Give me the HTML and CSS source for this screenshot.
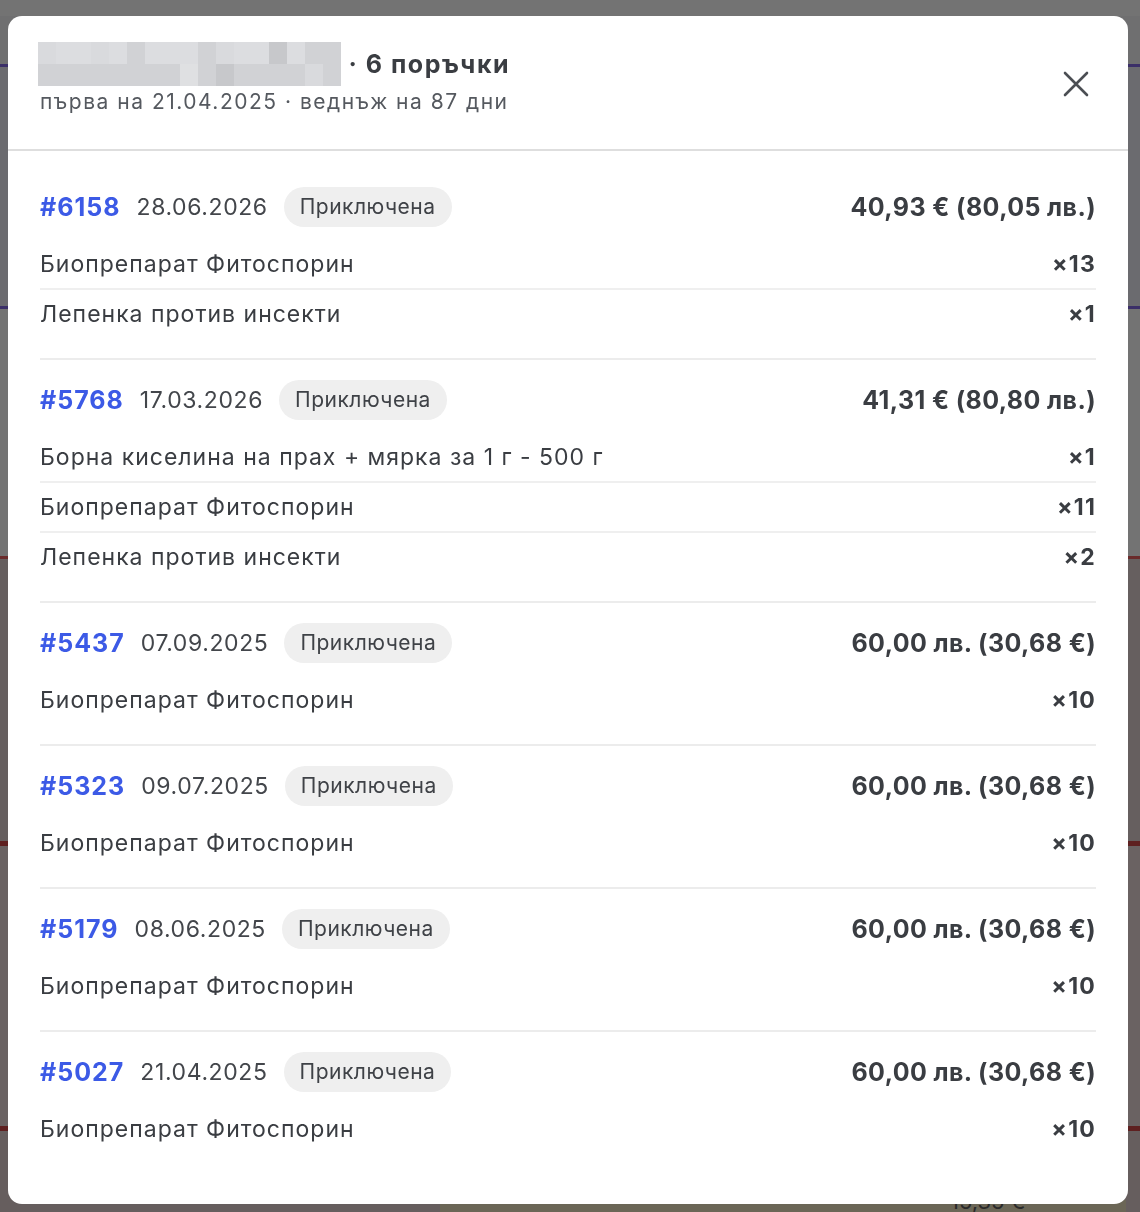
FILE: index.html
```html
<!DOCTYPE html>
<html lang="bg">
<head>
<meta charset="utf-8">
<title>Поръчки</title>
<link rel="stylesheet" href="styles.css">
</head>
<body>
<div class="backdrop">
  <div class="under-strip"></div>
  <div class="under-text">15,35 €</div>
</div>
<div class="overlay">
  <div class="modal" lang="bg">
    <header class="modal-head">
      <div class="head-text">
        <div class="title">
          <span class="blur">
            <i class="a"></i><i class="b"></i><i class="b"></i><i class="a"></i><i class="b"></i><i class="c"></i><i class="b"></i><i class="b"></i><i class="b"></i><i class="c"></i><i class="a"></i><i class="b"></i><i class="b"></i><i class="d"></i><i class="b"></i><i class="c"></i><i class="c"></i>
            <i class="c"></i><i class="c"></i><i class="c"></i><i class="c"></i><i class="c"></i><i class="c"></i><i class="c"></i><i class="c"></i><i class="e"></i><i class="c"></i><i class="d"></i><i class="c"></i><i class="c"></i><i class="c"></i><i class="c"></i><i class="a"></i><i class="c"></i>
          </span>
          <span class="count">· 6 поръчки</span>
        </div>
        <div class="subtitle">първа на 21.04.2025 · веднъж на 87 дни</div>
      </div>
      <button class="close" aria-label="Затвори">
        <svg width="26" height="26" viewBox="0 0 26 26"><path d="M2 2 L24 24 M24 2 L2 24" stroke="#4b4e53" stroke-width="2.6" stroke-linecap="round" fill="none"/></svg>
      </button>
    </header>
    <div class="modal-body">
      <section class="order">
        <div class="order-head">
          <a class="num">#6158</a><span class="date">28.06.2026</span><span class="badge">Приключена</span>
          <span class="total">40,93 € (80,05 лв.)</span>
        </div>
        <ul class="items">
          <li><span>Биопрепарат Фитоспорин</span><b>×13</b></li>
          <li><span>Лепенка против инсекти</span><b>×1</b></li>
        </ul>
      </section>
      <section class="order">
        <div class="order-head">
          <a class="num">#5768</a><span class="date">17.03.2026</span><span class="badge">Приключена</span>
          <span class="total">41,31 € (80,80 лв.)</span>
        </div>
        <ul class="items">
          <li><span>Борна киселина на прах + мярка за 1 г - 500 г</span><b>×1</b></li>
          <li><span>Биопрепарат Фитоспорин</span><b>×11</b></li>
          <li><span>Лепенка против инсекти</span><b>×2</b></li>
        </ul>
      </section>
      <section class="order">
        <div class="order-head">
          <a class="num">#5437</a><span class="date">07.09.2025</span><span class="badge">Приключена</span>
          <span class="total">60,00 лв. (30,68 €)</span>
        </div>
        <ul class="items">
          <li><span>Биопрепарат Фитоспорин</span><b>×10</b></li>
        </ul>
      </section>
      <section class="order">
        <div class="order-head">
          <a class="num">#5323</a><span class="date">09.07.2025</span><span class="badge">Приключена</span>
          <span class="total">60,00 лв. (30,68 €)</span>
        </div>
        <ul class="items">
          <li><span>Биопрепарат Фитоспорин</span><b>×10</b></li>
        </ul>
      </section>
      <section class="order">
        <div class="order-head">
          <a class="num">#5179</a><span class="date">08.06.2025</span><span class="badge">Приключена</span>
          <span class="total">60,00 лв. (30,68 €)</span>
        </div>
        <ul class="items">
          <li><span>Биопрепарат Фитоспорин</span><b>×10</b></li>
        </ul>
      </section>
      <section class="order">
        <div class="order-head">
          <a class="num">#5027</a><span class="date">21.04.2025</span><span class="badge">Приключена</span>
          <span class="total">60,00 лв. (30,68 €)</span>
        </div>
        <ul class="items">
          <li><span>Биопрепарат Фитоспорин</span><b>×10</b></li>
        </ul>
      </section>
    </div>
  </div>
</div>
</body>
</html>
```

FILE: styles.css
```css
* { box-sizing: border-box; }
html, body { margin: 0; padding: 0; }
body {
  width: 1140px;
  height: 1212px;
  overflow: hidden;
  font-family: Inter, "Noto Sans", "DejaVu Sans", sans-serif;
  color: #3a3d42;
}
.backdrop {
  height: 1212px;
  background: linear-gradient(to bottom,
    #737373 0, #737373 16px,
    #6f6f70 16px, #6f6f70 64px,
    #3b2f68 64px, #3b2f68 67px,
    #6b6b6f 67px, #6b6b6f 306px,
    #3b2f68 306px, #3b2f68 309px,
    #737373 309px, #737373 556px,
    #6a2b2b 556px, #6a2b2b 559px,
    #665f5f 559px, #665f5f 841px,
    #5e2020 841px, #5e2020 846px,
    #6a6262 846px, #6a6262 1126px,
    #5e2020 1126px, #5e2020 1131px,
    #665e5e 1131px);
  position: relative;
}
.under-strip {
  position: absolute;
  left: 440px; top: 1200px;
  width: 686px; height: 12px;
  background: #6b6656;
}
.under-text {
  position: absolute;
  left: 950px; top: 1190px;
  font-size: 22px;
  line-height: 22px;
  color: #2a2a2a;
}
.overlay {
  position: fixed;
  inset: 0;
  padding: 16px 12px 8px 8px;
  display: flex;
  align-items: flex-start;
}
.modal {
  width: 1120px;
  height: 1188px;
  background: #fff;
  border-radius: 14px;
  overflow: hidden;
}
.modal-head {
  display: flex;
  align-items: center;
  justify-content: space-between;
  padding: 26px 32px 33px 32px;
  border-bottom: 2px solid #dedede;
}
.title {
  display: flex;
  align-items: center;
  gap: 8px;
  height: 44px;
}
.blur {
  display: grid;
  grid-template-columns: repeat(17, 17.8px);
  grid-template-rows: 22px 22px;
  margin-left: -2px;
}
.blur i { display: block; }
.blur .a { background: #d9dadd; }
.blur .b { background: #dcdde0; }
.blur .c { background: #d1d2d5; }
.blur .d { background: #c7c8cb; }
.blur .e { background: #dfe0e2; }
.count {
  font-size: 25px;
  font-weight: 700;
  letter-spacing: 1.5px;
  color: #3a3d42;
}
.subtitle {
  margin-top: 2px;
  font-size: 21px;
  line-height: 28px;
  letter-spacing: 1.5px;
  color: #55595f;
}
.close {
  width: 40px; height: 40px;
  border: 0; background: none; padding: 0;
  display: flex; align-items: center; justify-content: center;
  margin-top: 10px;
}
.modal-body {
  padding: 16px 32px 0 32px;
}
.order {
  padding: 20px 0;
  border-bottom: 2px solid #ececec;
}
.order:last-child { border-bottom: 0; }
.order-head {
  display: flex;
  align-items: center;
  height: 40px;
  gap: 16px;
  margin-bottom: 13px;
}
.num {
  font-size: 25px;
  font-weight: 700;
  letter-spacing: 1px;
  color: #3c5ae6;
}
.date {
  font-size: 23px;
  letter-spacing: 0.6px;
  color: #43464b;
}
.badge {
  height: 40px;
  line-height: 40px;
  padding: 0 16px;
  border-radius: 20px;
  background: #efefef;
  font-size: 21px;
  letter-spacing: 0.5px;
  color: #3f4247;
}
.total {
  margin-left: auto;
  font-size: 25px;
  font-weight: 700;
  letter-spacing: 0.4px;
  color: #3a3d42;
}
.items {
  list-style: none;
  margin: 0;
  padding: 0;
}
.items li {
  display: flex;
  justify-content: space-between;
  align-items: center;
  height: 48px;
  font-size: 23px;
  letter-spacing: 1px;
  color: #3a3d42;
}
.items li + li {
  border-top: 2px solid #efefef;
  height: 50px;
}
.items b {
  font-weight: 700;
  font-size: 23px;
  letter-spacing: 1.2px;
}
```
